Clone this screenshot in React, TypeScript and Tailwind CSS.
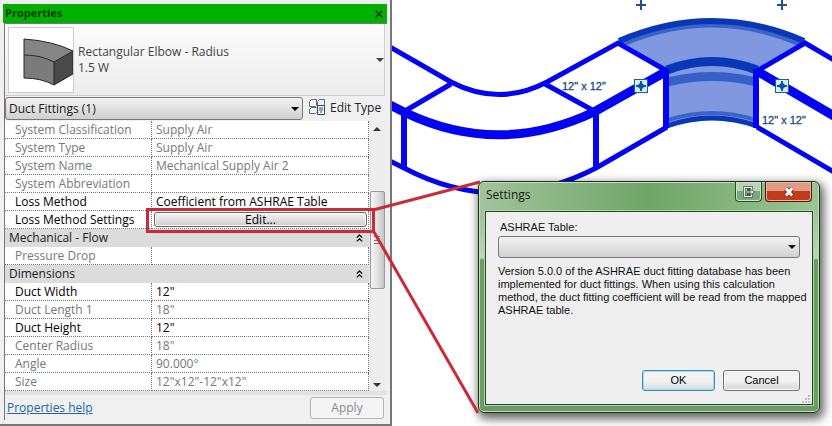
import React from "react";

type Row = { label: string; value?: string; kind?: "readonly" | "text" | "input" | "button" };
type Group = { title?: string; rows: Row[] };

const groups: Group[] = [
  {
    rows: [
      { label: "System Classification", value: "Supply Air" },
      { label: "System Type", value: "Supply Air" },
      { label: "System Name", value: "Mechanical Supply Air 2" },
      { label: "System Abbreviation" },
      { label: "Loss Method", value: "Coefficient from ASHRAE Table", kind: "text" },
      { label: "Loss Method Settings", value: "Edit...", kind: "button" },
    ],
  },
  { title: "Mechanical - Flow", rows: [{ label: "Pressure Drop" }] },
  {
    title: "Dimensions",
    rows: [
      { label: "Duct Width", value: '12"', kind: "input" },
      { label: "Duct Length 1", value: '18"' },
      { label: "Duct Height", value: '12"', kind: "input" },
      { label: "Center Radius", value: '18"' },
      { label: "Angle", value: "90.000°" },
      { label: "Size", value: '12"x12"-12"x12"' },
    ],
  },
];

function Caret({ className = "" }: { className?: string }) {
  return (
    <svg viewBox="0 0 8 4" className={`h-1 w-2 ${className}`} aria-hidden="true">
      <path d="M0 0h8L4 4z" fill="currentColor" />
    </svg>
  );
}

function ElbowPreview() {
  return (
    <svg viewBox="0 0 64 64" className="size-16" aria-hidden="true">
      <path d="M15 11Q44 13 64 23L45 34Q32 27 15 27Z" fill="#858585" />
      <path d="M15 27Q32 27 45 34V57Q32 50 15 50Z" fill="#7b7b7b" />
      <path d="M45 34L64 23V46L45 57Z" fill="#494949" />
      <path
        d="M15 11Q44 13 64 23L45 34Q32 27 15 27M15 11V50Q32 50 45 57V34M45 57L64 46V23"
        fill="none"
        stroke="#262626"
      />
    </svg>
  );
}

function EditTypeIcon() {
  return (
    <svg viewBox="0 0 17 17" className="size-[17px]" fill="none" aria-hidden="true">
      <path
        d="M2.5 .5h5v6l-1 1h-6v-5zM10.500 .5h5v6M10.500 .5l-2 2v4M2.500 8.500h5M2.500 8.500l-2 2v4h6l1-1"
        fill="#f4f6f8"
        stroke="#5b6d80"
      />
      <path d="M8.500 6.500h7v9h-7z" fill="#fff" stroke="#27466b" />
      <path d="M10 9h4M10 11h4M11 13h2" stroke="#27466b" />
    </svg>
  );
}

function DoubleChevron() {
  return (
    <svg viewBox="0 0 7 8" className="h-2 w-[7px]" fill="none" stroke="#111" strokeWidth="1.3" aria-hidden="true">
      <path d="M.8 3.6L3.5 1l2.7 2.6M.8 7.4l2.7-2.6 2.7 2.6" />
    </svg>
  );
}

function ValueCell({ row }: { row: Row }) {
  if (row.kind === "button")
    return (
      <button
        type="button"
        className="ml-0.5 block h-[15px] w-[calc(100%-3px)] rounded-[3px] border border-[#666] bg-linear-to-b from-[#f4f4f4] to-[#cfcfcf] text-center leading-[13px] text-black shadow-[inset_0_0_0_1px_#fafafa]"
      >
        {row.value}
      </button>
    );
  if (row.kind === "input")
    return (
      <input
        aria-label={row.label}
        defaultValue={row.value}
        className="block h-[17px] w-full bg-transparent pl-1 leading-4 text-black outline-none"
      />
    );
  return <span className="block pl-1">{row.value}</span>;
}

function PropertyTable() {
  return (
    <table className="w-full table-fixed border-separate border-spacing-0 bg-white text-xs leading-4 text-[#777]">
      <colgroup>
        <col className="w-[147px]" />
        <col />
      </colgroup>
      {groups.map((g, i) => (
        <tbody key={i}>
          {g.title && (
            <tr className="h-[18px] bg-[#dcdcdc] text-[#1a1a1a]">
              <th colSpan={2} scope="colgroup" className="p-0 pl-1 text-left font-normal">
                <div className="flex items-center justify-between pr-1.5">
                  {g.title}
                  <button type="button" aria-label={`Collapse ${g.title}`}>
                    <DoubleChevron />
                  </button>
                </div>
              </th>
            </tr>
          )}
          {g.rows.map((row) => (
            <tr key={row.label} className={row.kind ? "h-[18px] text-black" : "h-[18px]"}>
              <th
                scope="row"
                className="h-[18px] border-r border-b border-dotted border-[#777] p-0 pl-2.5 text-left font-normal whitespace-nowrap"
              >
                {row.label}
              </th>
              <td className="h-[18px] border-r border-b border-dotted border-[#777] p-0 whitespace-nowrap">
                <ValueCell row={row} />
              </td>
            </tr>
          ))}
        </tbody>
      ))}
    </table>
  );
}

function ScrollBar() {
  return (
    <div className="flex w-4 shrink-0 flex-col items-center bg-[#ededed] text-[#333]">
      <Caret className="mt-1.5 shrink-0 rotate-180" />
      <div className="mt-[60px] flex h-[98px] w-[15px] shrink-0 items-center justify-center rounded-xs border border-[#999] bg-linear-to-r from-[#f6f6f6] via-[#e2e2e2] to-[#c4c4c4]">
        <div className="flex h-2 w-1.5 items-center border-y border-[#777]">
          <div className="h-px w-full bg-[#777]" />
        </div>
      </div>
      <Caret className="mt-auto mb-1 shrink-0" />
    </div>
  );
}

function PropertiesPanel() {
  return (
    <aside className="flex w-[392px] shrink-0 flex-col border-r-2 border-b-2 border-[#777] bg-[#f0f0f0] pt-1 pr-[3px] pb-1 pl-[3px]">
      <header className="flex h-[19px] shrink-0 items-center justify-between bg-[#00b000] pr-1 pl-0.5">
        <h1 className="pb-0.5 text-[11px] leading-4 font-bold text-[#053a05]">Properties</h1>
        <button type="button" aria-label="Close properties" className="text-[#053a05]">
          <svg viewBox="0 0 8 8" className="size-2" stroke="currentColor" strokeWidth="1.6">
            <path d="M.8 .8l6.4 6.4M7.2 .8L.8 7.2" />
          </svg>
        </button>
      </header>
      <div className="ml-px flex grow flex-col border-t border-l border-[#777]">
        <div className="mr-0.5 flex h-[72px] shrink-0 items-center border-r border-b border-[#cfcfcf] bg-linear-to-b from-[#fcfcfc] to-[#ececec] pl-[3px]">
          <div className="size-[66px] shrink-0 border border-[#ccc] bg-white">
            <ElbowPreview />
          </div>
          <p className="grow pl-1 text-xs leading-4 text-[#444]">
            Rectangular Elbow - Radius
            <br />
            1.5 W
          </p>
          <button type="button" aria-label="Choose type" className="flex h-6 items-center text-[#444]">
            <Caret />
          </button>
        </div>
        <div className="flex h-[25px] shrink-0 items-center">
          <div className="relative flex w-[298px] items-center">
            <select
              aria-label="Category"
              className="h-[23px] w-full appearance-none rounded-[3px] border border-[#777] bg-linear-to-b from-[#f2f2f2] to-[#d0d0d0] pl-[3px] text-xs text-[#1a1a1a]"
            >
              <option>Duct Fittings (1)</option>
            </select>
            <Caret className="pointer-events-none absolute right-1" />
          </div>
          <button
            type="button"
            className="mb-0.5 ml-1.5 flex items-center gap-1 text-xs leading-4 whitespace-nowrap text-[#222]"
          >
            <EditTypeIcon />
            Edit Type
          </button>
        </div>
        <div className="mr-0.5 flex shrink-0">
          <div className="grow">
            <PropertyTable />
          </div>
          <ScrollBar />
        </div>
        <footer className="flex grow items-center justify-between border-t-4 border-[#e2e2e2] pr-[3px] pl-0.5">
          <a href="#help" className="text-xs leading-4 text-[#1a66a8] underline">
            Properties help
          </a>
          <button
            type="button"
            disabled
            className="h-[22px] w-[74px] rounded-[3px] border border-[#b4b4b4] bg-[#f4f4f4] text-xs text-[#8a8a8a]"
          >
            Apply
          </button>
        </footer>
      </div>
    </aside>
  );
}

function Connector({ x, y }: { x: number; y: number }) {
  return (
    <g>
      <rect x={x - 6.5} y={y - 6.5} width="13" height="13" fill="#cdeefb" stroke="#1f5a9c" />
      <path d={`M${x - 5} ${y}h10M${x} ${y - 5}v10`} stroke="#1450a0" strokeWidth="2" />
      <path d={`M${x - 4} ${y}l4 -4l4 4l-4 4z`} fill="#1450a0" stroke="none" />
    </g>
  );
}

function DuctDrawing() {
  return (
    <svg
      viewBox="392 0 440 426"
      className="absolute top-0 left-0 h-[426px] w-[440px]"
      fill="none"
      stroke="#0404f0"
      role="img"
      aria-label="Duct run with a selected elbow"
    >
      <path d="M618 43Q712 -1 805 43L757 70Q712 54 667 70Z" fill="#8098e0" stroke="none" />
      <path d="M667 70Q712 54 757 70V127Q712 107 667 127Z" fill="#8098e0" stroke="none" />
      <path d="M623 44Q712 6 800 44" stroke="#3c64c8" strokeWidth="5" />
      <path d="M619 41Q712 1 804 41" stroke="#0838b8" strokeWidth="6" />
      <path d="M668 82Q712 71 756 82" stroke="#3560c8" strokeWidth="9" />
      <path d="M667 70Q712 53 757 70" stroke="#0838b8" strokeWidth="9" />
      <path d="M668 120Q712 106 756 120" stroke="#3c64c8" strokeWidth="4" />
      <path d="M667 126Q712 110 757 126" stroke="#0838b8" strokeWidth="5" />
      <g strokeWidth="5">
        <path d="M390 47L451 82Q499 107 547 82L618 43L667 71" />
        <path d="M451 84L405 111M545 84L596 112" />
        <path d="M834 60L805 43L757 71" />
        <path d="M390 161L404 168Q499 218 596 168L667 127M757 127L834 172" />
        <path d="M404 111V168M596 111V168M666 69V128M756 69V128" strokeWidth="6" />
      </g>
      <path d="M390 105L406 113Q499 157 594 112L667 71" strokeWidth="9" />
      <path d="M757 71L834 116" strokeWidth="9" />
      <path d="M636 5h10M641 0v10M777 5h10M782 0v10" stroke="#1f4e9c" strokeWidth="2" />
      <Connector x={641} y={86} />
      <Connector x={782} y={86} />
      <g
        fill="#1c4a80"
        stroke="#1c4a80"
        strokeWidth="0.3"
        fontSize="11"
        fontFamily="'Liberation Sans', Arial, sans-serif"
      >
        <text x="562" y="90">12&quot; x 12&quot;</text>
        <text x="762" y="124">12&quot; x 12&quot;</text>
      </g>
    </svg>
  );
}

function SettingsDialog() {
  return (
    <section
      role="dialog"
      aria-labelledby="settings-title"
      className="absolute top-[181px] left-[86px] flex h-[232px] w-[342px] flex-col rounded-md border border-[#123512] bg-linear-to-b from-[#8fb588] from-0% via-[#bcd3b8] via-33% to-[#6b9c63] to-34% shadow-[2px_4px_10px_2px_rgba(0,0,0,0.6),inset_0_0_0_1px_#c5dec1]"
    >
      <header className="mx-px mt-px flex h-7 shrink-0 items-start justify-between rounded-t-md bg-linear-to-r from-[#a3c29d] via-[#6fa567] to-[#9cc494] px-1.5">
        <h2 id="settings-title" className="pt-1 text-xs leading-4 text-[#132413]">
          Settings
        </h2>
        <div className="-mt-px flex gap-[3px]">
          <button
            type="button"
            aria-label="Export"
            className="flex h-5 w-[27px] items-center justify-center rounded-b border border-t-0 border-[#24502a] bg-linear-to-b from-[#b9d3b5] from-45% to-[#7da87a] to-50% shadow-[inset_0_0_0_1px_#cfe2cc]"
          >
            <svg viewBox="0 0 12 12" className="size-3" fill="none" aria-hidden="true">
              <path d="M8.500 3.500v-2h-7v9h7v-2M4 6h4M4 4h3M4 8h3" stroke="#445a48" strokeWidth="2.600" />
              <path d="M8 3l3.500 3L8 9z" fill="#eef6ee" stroke="#445a48" />
              <path d="M8.500 3.500v-2h-7v9h7v-2M4 6h5" stroke="#eef6ee" strokeWidth="1.200" />
            </svg>
          </button>
          <button
            type="button"
            aria-label="Close settings"
            className="flex h-5 w-[47px] items-center justify-center rounded-b border border-t-0 border-[#4a1a10] bg-linear-to-b from-[#e09a84] from-45% to-[#c33a1c] to-50% shadow-[inset_0_0_0_1px_#eab5a4]"
          >
            <svg viewBox="0 0 12 10" className="h-2.5 w-3" aria-hidden="true">
              <path d="M3 1.500l6 7M9 1.500L3 8.500" stroke="#7a3020" strokeWidth="4.600" />
              <path d="M3 1.500l6 7M9 1.500L3 8.500" stroke="#fff" strokeWidth="2.800" />
            </svg>
          </button>
        </div>
      </header>
      <form
        onSubmit={(e) => e.preventDefault()}
        className="mx-1.5 mb-[7px] flex grow flex-col border border-[#1e4a1e] bg-[#efefef] px-3 pt-[9px] pb-[13px] font-['Liberation_Sans',Arial,sans-serif] text-[11px] leading-[13px] text-[#111] shadow-[0_0_0_1px_#b9d6b4]"
      >
        <label htmlFor="ashrae-table" className="pl-0.5">
          ASHRAE Table:
        </label>
        <div className="relative mt-0.5 flex items-center">
          <select
            id="ashrae-table"
            className="h-[22px] w-full appearance-none rounded-[3px] border border-[#777] bg-linear-to-b from-[#f2f2f2] to-[#d2d2d2]"
          >
            <option></option>
          </select>
          <Caret className="pointer-events-none absolute right-1" />
        </div>
        <p className="mt-[7px] whitespace-nowrap">
          Version 5.0.0 of the ASHRAE duct fitting database has been
          <br />
          implemented for duct fittings. When using this calculation
          <br />
          method, the duct fitting coefficient will be read from the mapped
          <br />
          ASHRAE table.
        </p>
        <div className="mt-auto flex justify-end gap-2">
          <button
            type="submit"
            className="h-[21px] w-[73px] rounded-[3px] border border-[#3f8fb0] bg-linear-to-b from-[#f2f2f2] from-50% to-[#d8dde0] to-100% text-black shadow-[inset_0_0_0_1px_#9fdcf0]"
          >
            OK
          </button>
          <button
            type="button"
            className="h-[21px] w-[77px] rounded-[3px] border border-[#707070] bg-linear-to-b from-[#f2f2f2] from-50% to-[#d6d6d6] to-100% text-black shadow-[inset_0_0_0_1px_#fafafa]"
          >
            Cancel
          </button>
        </div>
      </form>
      <svg viewBox="0 0 10 10" className="absolute right-2 bottom-2 size-2.5" fill="#c0c0c0" aria-hidden="true">
        <path d="M7 1h2v2H7zM7 4h2v2H7zM4 4h2v2H4zM7 7h2v2H7zM4 7h2v2H4zM1 7h2v2H1z" />
      </svg>
    </section>
  );
}

function Callout() {
  return (
    <svg
      viewBox="0 0 832 426"
      className="pointer-events-none absolute top-0 left-0 h-[426px] w-[832px]"
      fill="none"
      stroke="#cb2a38"
      strokeWidth="3"
      aria-hidden="true"
    >
      <path d="M147.500 209.500h226v22h-226zM373 210L480 182M374 232L478 413" />
    </svg>
  );
}

export default function App() {
  return (
    <div className="relative flex min-h-screen overflow-hidden bg-white font-['Segoe_UI','Open_Sans',sans-serif]">
      <PropertiesPanel />
      <main className="relative grow">
        <DuctDrawing />
        <SettingsDialog />
      </main>
      <Callout />
    </div>
  );
}
